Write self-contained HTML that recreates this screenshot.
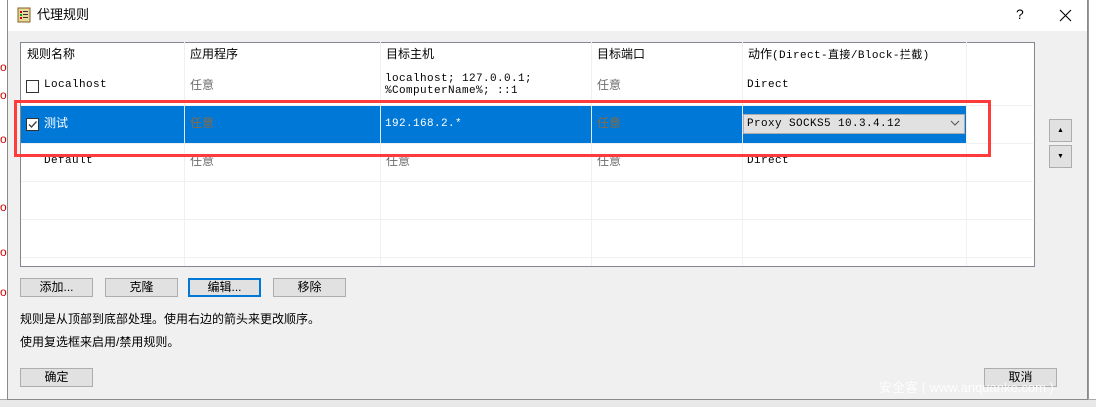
<!DOCTYPE html>
<html><head><meta charset="utf-8"><style>
*{margin:0;padding:0;box-sizing:border-box}
body{width:1096px;height:407px;position:relative;overflow:hidden;background:#f0f0f0;font-family:"Liberation Sans","Noto Sans CJK SC",sans-serif;font-size:12px;color:#000;line-height:1.2}
.a{position:absolute}
.mono{font-family:"Liberation Mono","Noto Sans CJK SC",monospace;font-size:11px;font-weight:normal;letter-spacing:0.4px}
.btn{position:absolute;height:19px;background:#e1e1e1;border:1px solid #adadad;text-align:center;line-height:17px;font-size:12px}
.vl{position:absolute;top:42px;width:1px;height:224px;background:#f0f0f0}
.hl{position:absolute;left:21px;width:1012px;height:1px;background:#f0f0f0}
.gray{color:#6d6d6d}
</style></head><body>
<div class="a" style="left:0;top:0;width:8px;height:407px;background:#fff"></div>
<div class="a" style="left:0;top:60px;color:#c00;font-size:12px">or</div>
<div class="a" style="left:0;top:200px;color:#c00;font-size:12px">or</div>
<div class="a" style="left:0;top:88px;color:#c00;font-size:12px">or</div>
<div class="a" style="left:0;top:132px;color:#c00;font-size:12px">or</div>
<div class="a" style="left:0;top:245px;color:#c00;font-size:12px">or</div>
<div class="a" style="left:0;top:285px;color:#c00;font-size:12px">or</div>
<div class="a" style="left:1088px;top:0;width:8px;height:407px;background:#fff;border-left:1px solid #999"></div>
<div class="a" style="left:0;top:399px;width:1096px;height:8px;background:#e8e8e8;border-top:1px solid #aaa"></div>
<div class="a" style="left:7px;top:0;width:1081px;height:400px;background:#f0f0f0;border:1px solid #8a8a8a;border-top:none"></div>
<div class="a" style="left:8px;top:0;width:1079px;height:31px;background:#fff"></div>
<svg class="a" style="left:16px;top:7px" width="16" height="16"><rect x="2" y="1" width="12" height="14" fill="#e8d8a0" stroke="#806020"/><rect x="4" y="4" width="2" height="2" fill="#c00"/><rect x="4" y="7" width="2" height="2" fill="#0a0"/><rect x="4" y="10" width="2" height="2" fill="#c00"/><rect x="7" y="4" width="5" height="1" fill="#333"/><rect x="7" y="7" width="5" height="1" fill="#333"/><rect x="7" y="10" width="5" height="1" fill="#333"/></svg>
<div class="a" style="left:37px;top:7px;font-size:13px">代理规则</div>
<div class="a" style="left:1016px;top:6px;font-size:14px">?</div>
<svg class="a" style="left:1059px;top:9px" width="13" height="13"><path d="M1 1L12 12M12 1L1 12" stroke="#000" stroke-width="1.1"/></svg>
<div class="a" style="left:20px;top:42px;width:1015px;height:225px;background:#fff;border:1px solid #828790"></div>
<div class="vl" style="left:184px"></div><div class="vl" style="left:380px"></div><div class="vl" style="left:591px"></div><div class="vl" style="left:742px"></div><div class="vl" style="left:966px"></div>
<div class="hl" style="top:105px"></div><div class="hl" style="top:143px"></div><div class="hl" style="top:181px"></div><div class="hl" style="top:219px"></div><div class="hl" style="top:257px"></div>
<div class="a" style="left:27px;top:47px">规则名称</div>
<div class="a" style="left:190px;top:47px">应用程序</div>
<div class="a" style="left:386px;top:47px">目标主机</div>
<div class="a" style="left:597px;top:47px">目标端口</div>
<div class="a" style="left:748px;top:47px">动作<span class="mono">(Direct-直接/Block-拦截)</span></div>
<div class="a" style="left:26px;top:80px;width:13px;height:13px;border:1px solid #333;background:#fff"></div>
<div class="a mono" style="left:44px;top:79px">Localhost</div>
<div class="a gray" style="left:190px;top:78px">任意</div>
<div class="a mono" style="left:385px;top:73px;line-height:12px">localhost; 127.0.0.1;<br>%ComputerName%; ::1</div>
<div class="a gray" style="left:597px;top:78px">任意</div>
<div class="a mono" style="left:747px;top:79px">Direct</div>
<div class="a" style="left:21px;top:106px;width:945px;height:37px;background:#0078d7"></div>
<div class="vl" style="left:184px;top:106px;height:37px;background:#e0e8f0"></div><div class="vl" style="left:380px;top:106px;height:37px;background:#e0e8f0"></div><div class="vl" style="left:591px;top:106px;height:37px;background:#e0e8f0"></div><div class="vl" style="left:742px;top:106px;height:37px;background:#e0e8f0"></div>
<div class="a" style="left:26px;top:118px;width:13px;height:13px;border:1px solid #333;background:#fff"></div>
<svg class="a" style="left:27px;top:119px" width="11" height="11"><path d="M2 5.5L4.5 8L9.5 2.5" stroke="#444" stroke-width="1.4" fill="none"/></svg>
<div class="a" style="left:44px;top:116px;color:#fff">测试</div>
<div class="a" style="left:190px;top:116px;color:#8a6a40">任意</div>
<div class="a mono" style="left:385px;top:118px;color:#fff">192.168.2.*</div>
<div class="a" style="left:597px;top:116px;color:#8a6a40">任意</div>
<div class="a" style="left:743px;top:114px;width:222px;height:20px;background:#e1e1e1;border:1px solid #adadad"></div>
<div class="a mono" style="left:747px;top:118px">Proxy SOCKS5 10.3.4.12</div>
<svg class="a" style="left:950px;top:120px" width="10" height="6"><path d="M1 1L5 5L9 1" stroke="#555" fill="none"/></svg>
<div class="a mono" style="left:44px;top:155px">Default</div>
<div class="a gray" style="left:190px;top:154px">任意</div>
<div class="a gray" style="left:386px;top:154px">任意</div>
<div class="a gray" style="left:597px;top:154px">任意</div>
<div class="a mono" style="left:747px;top:155px">Direct</div>
<div class="a" style="left:14px;top:100px;width:977px;height:57px;border:3px solid #ff3b3b"></div>
<div class="btn" style="left:1049px;top:119px;width:23px;height:23px;font-size:7px;line-height:21px">▲</div>
<div class="btn" style="left:1049px;top:145px;width:23px;height:23px;font-size:7px;line-height:21px">▼</div>
<div class="btn" style="left:20px;top:278px;width:73px">添加...</div>
<div class="btn" style="left:105px;top:278px;width:73px">克隆</div>
<div class="btn" style="left:188px;top:278px;width:73px;border:2px solid #0078d7;line-height:15px">编辑...</div>
<div class="btn" style="left:273px;top:278px;width:73px">移除</div>
<div class="a" style="left:20px;top:312px">规则是从顶部到底部处理。使用右边的箭头来更改顺序。</div>
<div class="a" style="left:20px;top:335px">使用复选框来启用/禁用规则。</div>
<div class="btn" style="left:20px;top:368px;width:73px">确定</div>
<div class="btn" style="left:984px;top:368px;width:73px">取消</div>
<div class="a" style="left:879px;top:380px;color:#fff;font-size:13px;opacity:.9">安全客 ( www.anquanke.com )</div>
</body></html>
